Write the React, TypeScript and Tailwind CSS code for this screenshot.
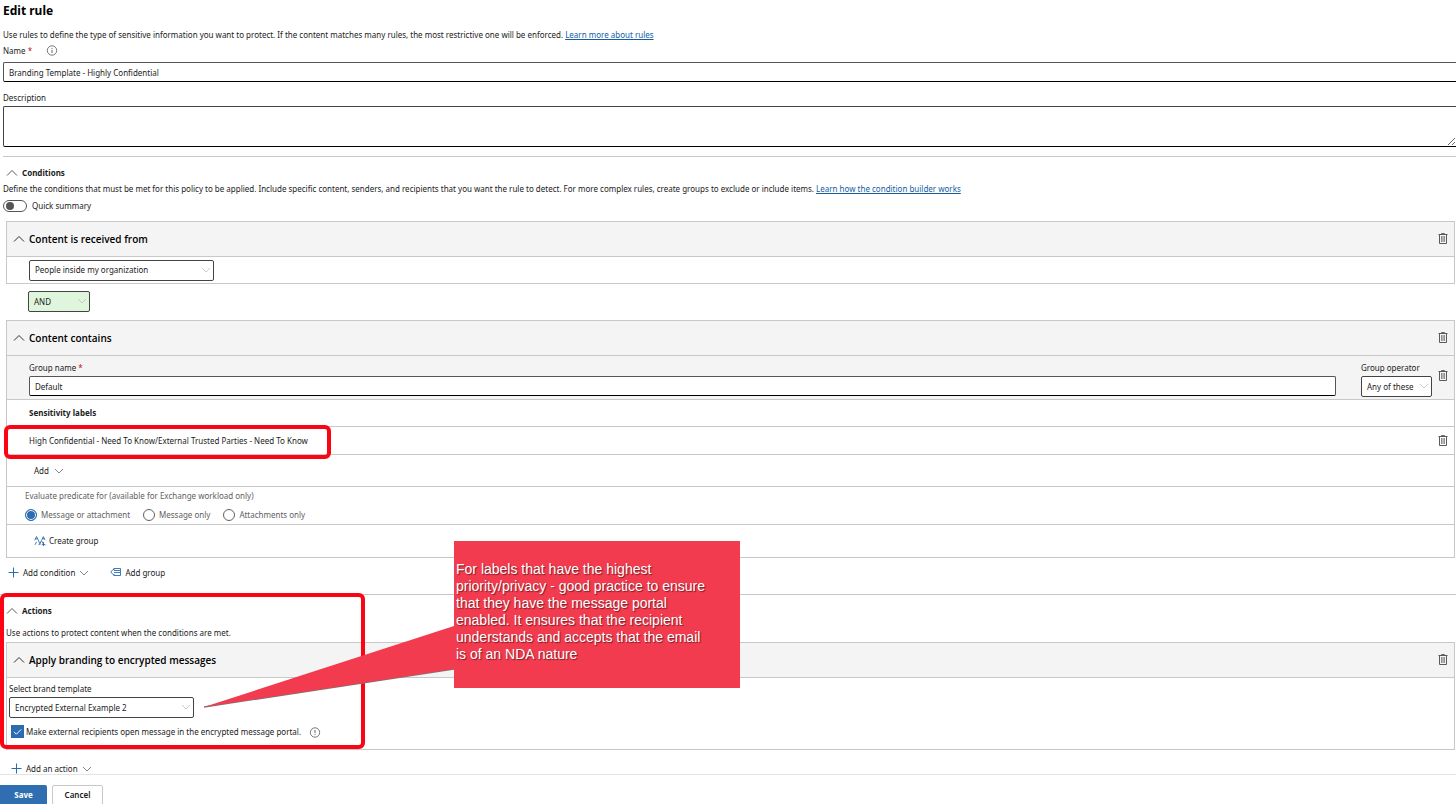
import { useState } from "react";
import type { ReactNode } from "react";

function Chevron({ up = false, className = "" }: { up?: boolean; className?: string }) {
  return (
    <svg
      viewBox="0 0 12 12"
      fill="none"
      stroke="currentColor"
      className={`h-3 w-3 shrink-0 ${className}`}
    >
      <path d={up ? "M1 8.5 6 3.5l5 5" : "M2 4l4 4 4-4"} strokeWidth="0.9" />
    </svg>
  );
}

function InfoIcon({ className = "" }: { className?: string }) {
  return (
    <svg
      viewBox="0 0 12 12"
      fill="none"
      stroke="#555555"
      className={`h-3 w-3 shrink-0 ${className}`}
    >
      <circle cx="6" cy="5.5" r="4.7" strokeWidth="0.8" />
      <path d="M6 4.8v3.2M6 2.9v1" strokeWidth="0.9" />
    </svg>
  );
}

function PlusIcon() {
  return (
    <svg viewBox="0 0 12 12" className="h-3 w-3 shrink-0">
      <path d="M5.5 0.5v10M0.5 5.5h10" stroke="#2b6cb0" />
    </svg>
  );
}

function TrashButton({ label }: { label: string }) {
  return (
    <button type="button" aria-label={label} className="shrink-0">
      <svg viewBox="0 0 12 12" fill="none" stroke="#5a5a5a" className="h-3 w-3">
        <path d="M1.5 1.5h9M4.5 1.2V0.6h3v0.6" />
        <path d="M2.5 1.5v9h7v-9" />
        <path d="M4.6 3v6M6 3v6M7.4 3v6" stroke="#777777" strokeWidth="0.9" />
      </svg>
    </button>
  );
}

interface SelectProps {
  id: string;
  value: string;
  label?: string;
  className?: string;
}

function Select({ id, value, label, className = "" }: SelectProps) {
  return (
    <div className={`relative ${className}`}>
      <select
        id={id}
        aria-label={label}
        className="block h-[21px] w-full appearance-none rounded-xs border border-[#444444] bg-transparent pr-3 pl-[5px]"
      >
        <option>{value}</option>
      </select>
      <Chevron className="pointer-events-none absolute top-1 right-[2px] text-[#c4c4c4]" />
    </div>
  );
}

interface CardHeaderProps {
  title: string;
}

function CardHeader({ title }: CardHeaderProps) {
  return (
    <div className="flex h-[35px] items-center bg-[#f4f4f4] pr-[5px] pl-[6px]">
      <button type="button" aria-label={`Collapse ${title}`} className="mr-1">
        <Chevron up />
      </button>
      <h3 className="flex-1 font-['Open_Sans','Noto_Sans',sans-serif] text-[10px] font-semibold text-black">
        {title}
      </h3>
      <TrashButton label={`Delete ${title}`} />
    </div>
  );
}

function Card({ children }: { children: ReactNode }) {
  return (
    <div className="mr-px ml-[6px] divide-y divide-[#c8c8c8] border border-[#c8c8c8] bg-white">
      {children}
    </div>
  );
}

const predicates = ["Message or attachment", "Message only", "Attachments only"];

export default function App() {
  const [name, setName] = useState("Branding Template - Highly Confidential");
  const [groupName, setGroupName] = useState("Default");
  const [quickSummary, setQuickSummary] = useState(false);
  const [predicate, setPredicate] = useState(predicates[0]);
  const [portal, setPortal] = useState(true);

  return (
    <div className="flex h-screen flex-col overflow-hidden bg-white font-['Noto_Sans','Open_Sans',sans-serif] text-[8px] leading-3 text-[#1b1b1b]">
      <main className="min-h-0 flex-1 overflow-hidden">
        <header className="pl-[3px]">
          <h1 className="text-[12px] leading-[22px] font-bold text-black">Edit rule</h1>
          <p className="mt-[7px]">
            Use rules to define the type of sensitive information you want to protect. If the
            content matches many rules, the most restrictive one will be enforced.{" "}
            <a href="#" className="text-[#115ea3] underline">
              Learn more about rules
            </a>
          </p>
        </header>

        <div className="pl-[3px]">
          <div className="mt-1 flex items-center">
            <label htmlFor="name">
              Name <span className="text-[#c50f1f]">*</span>
            </label>
            <InfoIcon className="ml-[14px]" />
          </div>
          <input
            id="name"
            value={name}
            onChange={(e) => setName(e.target.value)}
            className="mt-[5px] block h-5 w-full rounded-l-xs border border-r-0 border-[#555555] border-b-black pl-[5px] outline-none"
          />
          <label htmlFor="description" className="mt-[10px] block">
            Description
          </label>
          <textarea
            id="description"
            className="mt-[2px] block h-[41px] w-full rounded-l-xs border border-r-0 border-[#444444] border-b-black outline-none"
          />
        </div>

        <section className="mt-[9px] ml-[3px] border-t border-[#c8c8c8]">
          <h2 className="mt-[10px] flex items-center pl-[3px] font-bold">
            <Chevron up className="mr-1 text-[#444444]" />
            Conditions
          </h2>
          <p className="mt-1">
            Define the conditions that must be met for this policy to be applied. Include specific
            content, senders, and recipients that you want the rule to detect. For more complex
            rules, create groups to exclude or include items.{" "}
            <a href="#" className="text-[#115ea3] underline">
              Learn how the condition builder works
            </a>
          </p>
          <div className="mt-[5px] flex items-center gap-[5px]">
            <button
              id="quick-summary"
              type="button"
              role="switch"
              aria-checked={quickSummary}
              onClick={() => setQuickSummary(!quickSummary)}
              className={`flex h-3 w-6 items-center rounded-full border border-[#555555] px-[2px] ${
                quickSummary ? "justify-end" : "justify-start"
              }`}
            >
              <span className="h-2 w-2 rounded-full bg-[#555555]" />
            </button>
            <label htmlFor="quick-summary">Quick summary</label>
          </div>
        </section>

        <div className="mt-[9px]">
          <Card>
            <CardHeader title="Content is received from" />
            <div className="flex h-[26px] items-center pl-[22px]">
              <Select
                id="received-from"
                label="Content is received from"
                value="People inside my organization"
                className="w-[185px]"
              />
            </div>
          </Card>
        </div>

        <Select
          id="operator"
          label="Operator"
          value="AND"
          className="mt-[7px] ml-7 w-[62px] rounded-xs bg-[#dff6dd]"
        />

        <div className="mt-2">
          <Card>
            <CardHeader title="Content contains" />
            <div className="flex h-11 items-start bg-[#f4f4f4] pt-[6px] pr-[5px] pl-[22px]">
              <div className="flex-1">
                <label htmlFor="group-name" className="block">
                  Group name <span className="text-[#c50f1f]">*</span>
                </label>
                <input
                  id="group-name"
                  value={groupName}
                  onChange={(e) => setGroupName(e.target.value)}
                  className="mt-[2px] block h-5 w-full rounded-xs border border-[#555555] border-b-black bg-white pl-[5px] outline-none"
                />
              </div>
              <div className="ml-[25px]">
                <label htmlFor="group-operator" className="mb-[2px] block">
                  Group operator
                </label>
                <Select
                  id="group-operator"
                  value="Any of these"
                  className="w-[71px] rounded-xs bg-white"
                />
              </div>
              <div className="mt-2 ml-[5px]">
                <TrashButton label="Delete group" />
              </div>
            </div>
            <h4 className="flex h-[27px] items-center pl-[22px] font-bold">Sensitivity labels</h4>
            <div className="relative flex h-7 items-center justify-between pr-[5px] pl-[22px]">
              <span>High Confidential - Need To Know/External Trusted Parties - Need To Know</span>
              <TrashButton label="Delete sensitivity label" />
              <div className="absolute -top-[2px] -left-[3px] h-[34px] w-[327px] rounded-md border-4 border-[#fb0414]" />
            </div>
            <div className="flex h-8 items-center pl-[27px]">
              <button type="button" className="flex items-center gap-1">
                Add
                <Chevron className="text-[#777777]" />
              </button>
            </div>
            <fieldset className="h-[38px] pt-[3px] pl-[18px] text-[#616161]">
              <legend className="float-left w-full">
                Evaluate predicate for (available for Exchange workload only)
              </legend>
              <div className="clear-left flex gap-[13px] pt-[7px]">
                {predicates.map((item) => (
                  <label key={item} className="flex items-center gap-1">
                    <input
                      type="radio"
                      name="predicate"
                      checked={predicate === item}
                      onChange={() => setPredicate(item)}
                      className="h-3 w-3 appearance-none rounded-full border border-[#616161] checked:border-[#2b6cb0] checked:bg-[#2b6cb0] checked:shadow-[inset_0_0_0_1px_#ffffff]"
                    />
                    {item}
                  </label>
                ))}
              </div>
            </fieldset>
            <div className="flex h-8 items-center pl-[27px]">
              <button type="button" className="flex items-center gap-[3px]">
                <svg viewBox="0 0 12 12" fill="none" stroke="#2b6cb0" className="h-3 w-3">
                  <path d="M0.8 5.2 2.5 1.5l1.8 3.7 1.6 3.6 1.7-3.6M7.8 4.8 9.3 1.6l1.6 3.2M1 9.8l1.5-3M7.8 6.2l2 3.4" strokeWidth="0.9" />
                  <path d="M4.5 9.3h2M9.5 7v4M7.8 9.6h3.6M1.3 3.8h2.4M8 3.8h2.7" strokeWidth="0.9" />
                </svg>
                Create group
              </button>
            </div>
          </Card>
        </div>

        <div className="mt-[9px] flex items-center gap-5 pl-2">
          <button type="button" className="flex items-center gap-[3px]">
            <PlusIcon />
            Add condition
            <Chevron className="text-[#777777]" />
          </button>
          <button type="button" className="flex items-center gap-[3px]">
            <svg viewBox="0 0 12 12" fill="none" stroke="#2b6cb0" className="h-3 w-3">
              <path d="M3.5 1.5h7v7h-7M0.8 5 3 2.5h1.5M0.8 5 3 7.5h1.5" strokeWidth="0.9" />
              <path d="M4 3.5h6M4 5.5h6" strokeWidth="0.9" />
            </svg>
            Add group
          </button>
        </div>

        <section className="relative mt-[15px] border-t border-[#c8c8c8]">
          <h2 className="mt-[10px] flex items-center pl-[6px] font-bold">
            <Chevron up className="mr-1 text-[#444444]" />
            Actions
          </h2>
          <p className="mt-[10px] mb-[3px] pl-[6px]">
            Use actions to protect content when the conditions are met.
          </p>
          <Card>
            <CardHeader title="Apply branding to encrypted messages" />
            <div className="h-[71px] pt-[5px] pl-[2px]">
              <label htmlFor="template" className="block">
                Select brand template
              </label>
              <Select
                id="template"
                value="Encrypted External Example 2"
                className="mt-[2px] w-[185px]"
              />
              <div className="mt-[7px] flex items-center pl-[2px]">
                <label className="flex items-center gap-[2px]">
                  <span className="relative block h-[13px] w-[13px]">
                    <input
                      type="checkbox"
                      checked={portal}
                      onChange={() => setPortal(!portal)}
                      className="block h-[13px] w-[13px] appearance-none border border-[#2b6cb0] bg-white checked:bg-[#2b6cb0]"
                    />
                    <svg
                      viewBox="0 0 13 13"
                      fill="none"
                      stroke="#ffffff"
                      className="pointer-events-none absolute inset-0"
                    >
                      <path d="M3 6.8l2.4 2.4 4.8-4.8" />
                    </svg>
                  </span>
                  Make external recipients open message in the encrypted message portal.
                </label>
                <InfoIcon className="ml-2 rotate-180" />
              </div>
            </div>
          </Card>

          <div className="absolute -top-[2px] left-0 h-[156px] w-[365px] rounded-md border-4 border-[#fb0414]" />

          {/* Callout pointing at the brand template */}
          <div className="absolute -top-[54px] left-[204px] flex">
            <svg viewBox="0 0 250 170" className="h-[170px] w-[250px]">
              <path d="M0 166 250 128" stroke="#777777" strokeWidth="1.5" />
              <path d="M0 166 250 85v43z" fill="#f23b4e" />
            </svg>
            <div className="h-[147px] w-[286px] bg-[#f23b4e] pt-5 pr-7 pl-[2px] font-['Liberation_Sans',Arial,sans-serif] text-[14px] leading-[17px] text-white [text-shadow:1px_1px_1px_#00000080]">
              For labels that have the highest priority/privacy - good practice to ensure that they
              have the message portal enabled. It ensures that the recipient understands and
              accepts that the email is of an NDA nature
            </div>
          </div>
        </section>

        <button type="button" className="mt-[13px] ml-[11px] flex items-center gap-[3px]">
          <PlusIcon />
          Add an action
          <Chevron className="text-[#777777]" />
        </button>
      </main>

      <footer className="flex h-[30px] shrink-0 gap-[5px] border-t border-[#e4e4e4] pt-[10px]">
        <button
          type="button"
          className="h-5 w-[47px] rounded-r-xs bg-[#2f6eb0] font-bold text-white"
        >
          Save
        </button>
        <button
          type="button"
          className="h-5 w-[51px] rounded-xs border border-[#c8c8c8] bg-white font-semibold"
        >
          Cancel
        </button>
      </footer>
    </div>
  );
}
